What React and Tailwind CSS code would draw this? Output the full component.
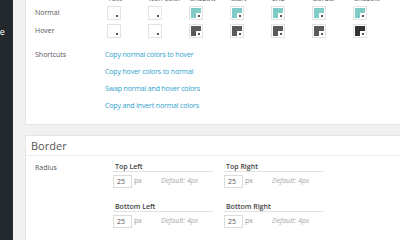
import React from 'react';

const cols = [
  { name: 'Text', normal: null, hover: null },
  { name: 'Icon color', normal: null, hover: null },
  { name: 'Shadow', normal: '#7ecbc8', hover: '#5b5b5b' },
  { name: 'Start', normal: '#7ecbc8', hover: '#5b5b5b' },
  { name: 'End', normal: '#7ecbc8', hover: '#5b5b5b' },
  { name: 'Border', normal: '#7ecbc8', hover: '#5b5b5b' },
  { name: 'Shadow', normal: '#7ecbc8', hover: '#333333' },
];

const shortcuts = [
  'Copy normal colors to hover',
  'Copy hover colors to normal',
  'Swap normal and hover colors',
  'Copy and invert normal colors',
];

const Swatch = ({ color }) => (
  <div className="w-[14px] h-[14px] border border-[#e3e3e3] p-[1px] bg-white">
    <div className="relative w-full h-full" style={{ background: color || '#ffffff' }}>
      <div className="absolute right-0 bottom-0 w-[5px] h-[5px] bg-white flex items-center justify-center">
        <div className="w-[2px] h-[2px] bg-[#555]"></div>
      </div>
    </div>
  </div>
);

const RadiusField = ({ label }) => (
  <div className="w-[111px]">
    <div className="w-[100px] h-[10px] leading-[10px] border-b border-[#e2e2e2] text-[7px] font-semibold text-[#444] pl-[2px]">{label}</div>
    <div className="flex items-center mt-[3px]">
      <div className="w-[19px] h-[13px] border border-[#dcdcdc] text-[7px] text-[#555] leading-[11px] pl-[3px]">25</div>
      <span className="ml-[2px] text-[7px] text-[#999]">px</span>
      <span className="ml-[19px] text-[7px] italic text-[#aaa]">Default: 4px</span>
    </div>
  </div>
);

const App = () => {
  return (
    <div className="w-[400px] h-[240px] overflow-hidden flex font-['Open_Sans',sans-serif]">
      <div className="w-[13px] shrink-0 bg-[#23282d] overflow-hidden">
        <div className="mt-[26px] ml-[-24px] text-white text-[9px] leading-[12px] whitespace-nowrap">Theme</div>
      </div>
      <div className="flex-1 bg-[#f1f1f1] pl-[12px] overflow-hidden">
        <div className="w-[400px] h-[125px] bg-white border border-t-0 border-[#e5e5e5] overflow-hidden">
          <div className="mt-[-6px] pl-[9px]">
            <div className="flex h-[9px]">
              <div className="w-[72px]"></div>
              {cols.map((c, i) => (
                <div key={i} className="w-[41px] text-[7px] leading-[9px] text-[#555] pl-[1px] whitespace-nowrap">{c.name}</div>
              ))}
            </div>
            <div className="flex items-center mt-[3px] h-[14px]">
              <div className="w-[72px] text-[7px] text-[#555]">Normal</div>
              {cols.map((c, i) => (
                <div key={i} className="w-[41px]"><Swatch color={c.normal} /></div>
              ))}
            </div>
            <div className="flex items-center mt-[4px] h-[14px]">
              <div className="w-[72px] text-[7px] text-[#555]">Hover</div>
              {cols.map((c, i) => (
                <div key={i} className="w-[41px]"><Swatch color={c.hover} /></div>
              ))}
            </div>
            <div className="flex mt-[11px]">
              <div className="w-[70px] text-[7px] leading-[12px] text-[#555]">Shortcuts</div>
              <div className="flex flex-col gap-[5px]">
                {shortcuts.map((s, i) => (
                  <a key={i} className="text-[7px] leading-[12px] tracking-[-0.15px] text-[#2ea2cc]">{s}</a>
                ))}
              </div>
            </div>
          </div>
        </div>
        <div className="mt-[10px] w-[400px] bg-white border border-[#e5e5e5] h-[200px]">
          <div className="h-[20px] border-b border-[#eee] pl-[5px] text-[11px] leading-[20px] text-[#555]">Border</div>
          <div className="flex pl-[9px] pt-[6px]">
            <div className="w-[78px] text-[7px] leading-[12px] text-[#555]">Radius</div>
            <div className="flex flex-col gap-[14px]">
              <div className="flex">
                <RadiusField label="Top Left" />
                <RadiusField label="Top Right" />
              </div>
              <div className="flex">
                <RadiusField label="Bottom Left" />
                <RadiusField label="Bottom Right" />
              </div>
            </div>
          </div>
        </div>
      </div>
    </div>
  );
};

export default App;
